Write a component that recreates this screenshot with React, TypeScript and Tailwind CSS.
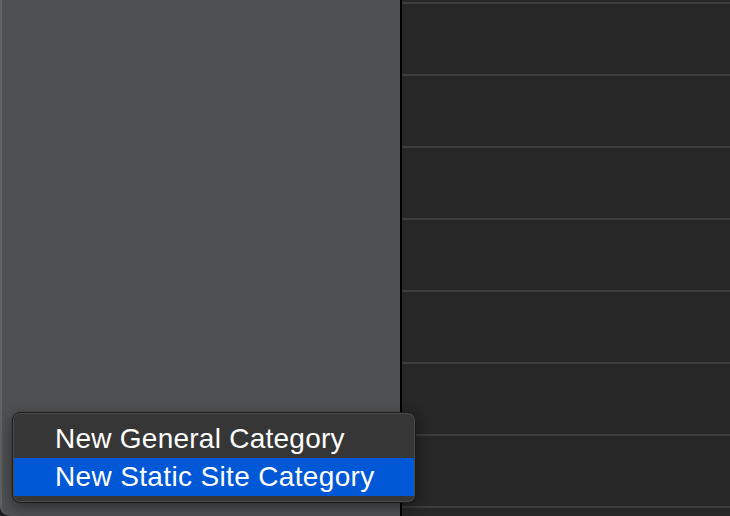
import React from 'react';

const rows = [0, 1, 2, 3, 4, 5, 6, 7];

export default function App() {
  return (
    <div className="relative flex w-[730px] h-[516px] overflow-hidden bg-[#1c1c1c]" style={{ fontFamily: '"Liberation Sans", Arial, sans-serif' }}>
      {/* sidebar */}
      <div className="w-[400px] h-full bg-[#4f5052] border-l-2 border-[#616264] rounded-bl-[10px]" />
      {/* divider */}
      <div className="w-[2px] h-full bg-black" />
      {/* list */}
      <div className="flex-1 h-full bg-[#272727] flex flex-col pt-[2px]">
        {rows.map((r) => (
          <div key={r} className="shrink-0">
            <div className="h-[2px] bg-[#3c3c3c]" />
            <div className="h-[70px]" />
          </div>
        ))}
      </div>

      {/* context menu */}
      <div className="absolute left-[12px] top-[412px] w-[404px] h-[91px] rounded-[8px] border border-[#1b1b1b] bg-[#363636] shadow-[inset_0_0_0_1px_#4c4c4c,0_4px_14px_rgba(0,0,0,0.45)] py-[7px] px-[1px]">
        <div className="h-[38px] flex items-center pl-[41px] text-[28px] text-white tracking-[0.25px]">
          New General Category
        </div>
        <div className="h-[38px] flex items-center pl-[41px] text-[28px] text-white bg-[#0058d7] tracking-[0.35px]">
          New Static Site Category
        </div>
      </div>
    </div>
  );
}
